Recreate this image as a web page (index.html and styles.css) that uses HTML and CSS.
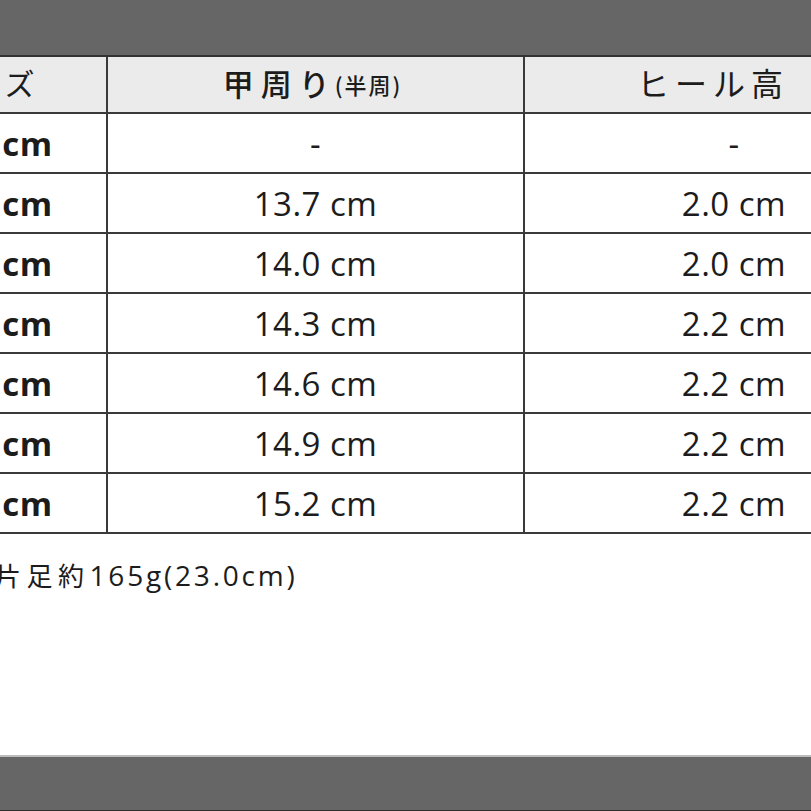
FILE: index.html
```html
<!DOCTYPE html>
<html lang="ja">
<head>
<meta charset="utf-8">
<link rel="stylesheet" href="styles.css">
</head>
<body>
<div class="frame">
  <div class="bar bar-top"></div>
  <div class="content">
    <div class="table">
      <div class="row head">
        <div class="cell">サイズ</div>
        <div class="cell bold">甲周り<span class="small">(半周)</span></div>
        <div class="cell heel">ヒール高</div>
      </div>
      <div class="row">
        <div class="cell size">22.0 cm</div>
        <div class="cell">-</div>
        <div class="cell">-</div>
      </div>
      <div class="row">
        <div class="cell size">22.5 cm</div>
        <div class="cell">13.7 cm</div>
        <div class="cell">2.0 cm</div>
      </div>
      <div class="row">
        <div class="cell size">23.0 cm</div>
        <div class="cell">14.0 cm</div>
        <div class="cell">2.0 cm</div>
      </div>
      <div class="row">
        <div class="cell size">23.5 cm</div>
        <div class="cell">14.3 cm</div>
        <div class="cell">2.2 cm</div>
      </div>
      <div class="row">
        <div class="cell size">24.0 cm</div>
        <div class="cell">14.6 cm</div>
        <div class="cell">2.2 cm</div>
      </div>
      <div class="row">
        <div class="cell size">24.5 cm</div>
        <div class="cell">14.9 cm</div>
        <div class="cell">2.2 cm</div>
      </div>
      <div class="row">
        <div class="cell size">25.0 cm</div>
        <div class="cell">15.2 cm</div>
        <div class="cell">2.2 cm</div>
      </div>
    </div>
    <p class="note"><span class="jp">片足約</span>165g(23.0cm)</p>
  </div>
  <div class="bar bar-bottom"></div>
</div>
</body>
</html>
```

FILE: styles.css
```css
html, body {
  margin: 0;
  padding: 0;
  background: #ffffff;
}
body {
  width: 811px;
  height: 811px;
  overflow: hidden;
  font-family: "Open Sans", "Noto Sans CJK JP", sans-serif;
  color: #1c1c1c;
}
.frame {
  display: flex;
  flex-direction: column;
  width: 811px;
  height: 811px;
}
.bar {
  background: #666666;
  flex: none;
}
.bar-top {
  height: 55px;
  border-bottom: 2px solid #333333;
}
.bar-bottom {
  height: 53px;
  border-top: 2px solid #bdbdbd;
  border-bottom: 1px solid #2e2e2e;
}
.content {
  flex: 1;
  overflow: hidden;
}
.table {
  margin-left: -128px;
  width: 1073px;
}
.row {
  display: grid;
  grid-template-columns: 236px 417px 420px;
  height: 60px;
  border-bottom: 2px solid #3a3a3a;
  box-sizing: border-box;
}
.row.head {
  height: 57px;
  background: #ebebeb;
}
.cell {
  display: flex;
  align-items: center;
  justify-content: center;
  border-right: 2px solid #3a3a3a;
  font-size: 33px;
  letter-spacing: 0.5px;
  white-space: nowrap;
}
.head .cell {
  font-family: "Noto Sans CJK JP", sans-serif;
  font-size: 30px;
  letter-spacing: 2px;
  padding-bottom: 5px;
}
.head .bold {
  font-weight: 500;
  font-size: 31px;
  letter-spacing: 7px;
  padding-right: 6px;
}
.head .small {
  font-size: 22px;
  font-weight: 500;
  letter-spacing: 2px;
  margin-left: -2px;
  padding-top: 4px;
}
.head .heel {
  font-size: 32px;
  letter-spacing: 6px;
  padding-right: 42px;
}
.size {
  font-weight: 700;
}
.note {
  margin: 22px 0 0 -5px;
  font-size: 28px;
  letter-spacing: 2.8px;
  font-family: "Open Sans", "Noto Sans CJK JP", sans-serif;
}
.note .jp {
  font-family: "Noto Sans CJK JP", sans-serif;
  font-size: 26px;
  letter-spacing: 5.5px;
}
```
